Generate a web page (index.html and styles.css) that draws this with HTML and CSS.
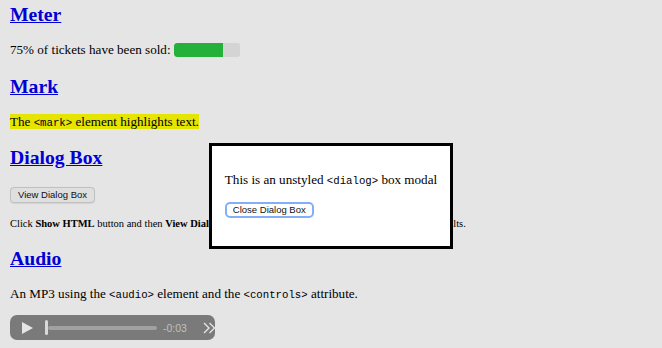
FILE: index.html
```html
<!DOCTYPE html>
<html lang="en">
<head>
<meta charset="utf-8">
<title>HTML elements</title>
<link rel="stylesheet" href="styles.css">
</head>
<body>
<main class="page">
  <h2 class="heading first"><a href="#meter">Meter</a></h2>
  <p class="text">75% of tickets have been sold: <meter class="meter" min="0" max="100" value="75">75%</meter></p>

  <h2 class="heading"><a href="#mark">Mark</a></h2>
  <p class="text"><mark class="hl">The <code class="code">&lt;mark&gt;</code> element highlights text.</mark></p>

  <h2 class="heading"><a href="#dialog">Dialog Box</a></h2>
  <p class="text"><button class="btn btn-page" type="button">View Dialog Box</button></p>
  <p class="small">Click <b>Show HTML</b> button and then <b>View Dialog Box</b> button to see the new dialog in action with its results.</p>

  <h2 class="heading"><a href="#audio">Audio</a></h2>
  <p class="text">An MP3 using the <code class="code">&lt;audio&gt;</code> element and the <code class="code">&lt;controls&gt;</code> attribute.</p>
  <div class="player">
    <svg class="play" width="11" height="12" viewBox="0 0 11 12"><path d="M0 0 L11 6 L0 12 Z" fill="#fff"/></svg>
    <span class="thumb"></span>
    <span class="track"></span>
    <span class="time">-0:03</span>
    <svg class="more" width="13" height="12" viewBox="0 0 13 12"><path d="M1 1 L6 6 L1 11 M6.5 1 L11.5 6 L6.5 11" fill="none" stroke="#fff" stroke-width="1.4"/></svg>
  </div>
</main>
<div class="backdrop"></div>
<div class="dialog" role="dialog">
  <p class="text">This is an unstyled <code class="code">&lt;dialog&gt;</code> box modal</p>
  <p class="text"><button class="btn btn-close" type="button">Close Dialog Box</button></p>
</div>
</body>
</html>
```
FILE: styles.css
```css
html, body {
  margin: 0;
  padding: 0;
  background: #fff;
}
body {
  font-family: "Liberation Serif", "Times New Roman", serif;
  font-size: 13.12px;
  color: #000;
  overflow: hidden;
}
.page {
  padding-left: 10px;
}
.heading {
  font-size: 1.5em;
  font-weight: bold;
  margin: 0.83em 0;
}
.heading.first {
  margin-top: 3px;
}
.heading a {
  color: #0000ee;
  text-decoration: underline;
}
.text {
  margin: 1em 0;
}
.small {
  font-size: 10.5px;
  margin: 15px 0 18px;
}
.code {
  font-family: "Liberation Mono", "Courier New", monospace;
  font-size: 10.7px;
}
.hl {
  background: #ffff00;
  color: #000;
}
.meter {
  -webkit-appearance: none;
  appearance: none;
  width: 66px;
  height: 14px;
  vertical-align: -3px;
  border-radius: 3px;
  background: #ececec;
}
.meter::-webkit-meter-bar {
  background: #ececec;
  border: 0;
  border-radius: 3px;
  height: 14px;
}
.meter::-webkit-meter-optimum-value {
  background: #28c442;
  border-radius: 3px 0 0 3px;
}
.btn {
  font-family: "Liberation Sans", Arial, sans-serif;
  font-size: 9.5px;
  color: #111;
  border-radius: 4px;
  line-height: 12px;
  margin: 0;
  white-space: nowrap;
}
.btn-page {
  background: #f9f9f9;
  border: 1px solid #d6d6d6;
  padding: 1px 7px;
  height: 16px;
  box-shadow: 0 0.5px 1px rgba(0,0,0,0.08);
}
.btn-close {
  background: #fff;
  border: 2px solid #84aef7;
  border-radius: 5px;
  padding: 0 6px;
  height: 16px;
}
.player {
  display: flex;
  align-items: center;
  width: 205px;
  height: 25px;
  margin-top: 13px;
  background: #888;
  border-radius: 7px;
  overflow: hidden;
  box-sizing: border-box;
  padding-left: 12px;
}
.play {
  flex: none;
}
.thumb {
  flex: none;
  width: 3px;
  height: 15px;
  border-radius: 1.5px;
  background: #f2f2f2;
  margin-left: 12px;
}
.track {
  flex: none;
  width: 109px;
  height: 4px;
  border-radius: 2px;
  background: #b4b4b4;
}
.time {
  flex: none;
  font-family: "Liberation Sans", Arial, sans-serif;
  font-size: 10.5px;
  color: #d6d6d6;
  margin-left: 6px;
  width: 34px;
}
.more {
  flex: none;
  margin-left: 6px;
}
.backdrop {
  position: fixed;
  inset: 0;
  background: rgba(0,0,0,0.1);
}
.dialog {
  position: fixed;
  top: 143px;
  left: 0;
  right: 0;
  margin: 0 auto;
  width: fit-content;
  background: #fff;
  color: #000;
  border: 3px solid #000;
  padding: 0 1em;
  font-size: 13.12px;
}
.dialog .text {
  margin: 13px 0;
}
.dialog .text:first-child {
  margin-top: 26px;
}
.dialog .text:last-child {
  margin-bottom: 28px;
}
```
